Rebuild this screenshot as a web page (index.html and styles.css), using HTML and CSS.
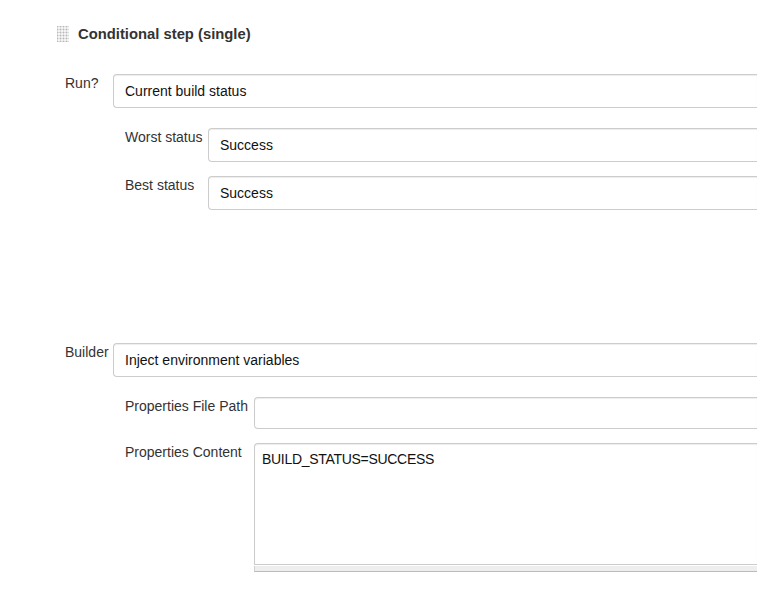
FILE: index.html
```html
<!DOCTYPE html>
<html>
<head>
<meta charset="utf-8">
<link rel="stylesheet" href="styles.css">
</head>
<body>
<div class="page">
  <div class="step">
    <div class="step-header">
      <svg class="handle" width="12" height="16" viewBox="0 0 12 16">
        <defs>
          <pattern id="grid" width="3" height="3" patternUnits="userSpaceOnUse">
            <rect x="0" y="0" width="3" height="3" fill="#f4f4f4"/>
            <rect x="0" y="0" width="1" height="3" fill="#dcdcdc"/>
            <rect x="0" y="0" width="3" height="1" fill="#dcdcdc"/>
            <rect x="0" y="0" width="1" height="1" fill="#b8b8b8"/>
          </pattern>
        </defs>
        <rect x="0" y="0" width="12" height="16" fill="url(#grid)"/>
      </svg>
      <span class="step-title">Conditional step (single)</span>
    </div>

    <div class="row row-main run-row">
      <div class="label main-label">Run?</div>
      <div class="field">Current build status</div>
    </div>

    <div class="nested nested-status">
      <div class="row">
        <div class="label status-label">Worst status</div>
        <div class="field">Success</div>
      </div>
      <div class="row gap-row">
        <div class="label status-label">Best status</div>
        <div class="field">Success</div>
      </div>
    </div>

    <div class="row row-main builder-row">
      <div class="label main-label">Builder</div>
      <div class="field">Inject environment variables</div>
    </div>

    <div class="nested nested-props">
      <div class="row">
        <div class="label props-label">Properties File Path</div>
        <div class="field field-text"></div>
      </div>
      <div class="row gap-row">
        <div class="label props-label">Properties Content</div>
        <div class="area-wrap">
          <div class="textarea">BUILD_STATUS=SUCCESS</div>
          <div class="grippie"></div>
        </div>
      </div>
    </div>
  </div>
</div>
</body>
</html>
```

FILE: styles.css
```css
html, body {
  margin: 0;
  padding: 0;
  background: #ffffff;
  overflow: hidden;
}

.page {
  height: 601px;
  font-family: "Liberation Sans", Arial, sans-serif;
  font-size: 14px;
  color: #333333;
}

.step {
  padding-left: 57px;
  padding-top: 26px;
}

.step-header {
  display: flex;
  align-items: center;
  height: 16px;
}

.handle {
  display: block;
  flex: none;
}

.step-title {
  margin-left: 9px;
  font-weight: bold;
  font-size: 14.8px;
  color: #333333;
  line-height: 16px;
}

.row {
  display: flex;
  align-items: flex-start;
}

.row-main {
  margin-left: 8px;
}

.run-row {
  margin-top: 32px;
}

.builder-row {
  margin-top: 133px;
}

.label {
  flex: none;
  line-height: 16px;
  padding-top: 1px;
  color: #333333;
  white-space: nowrap;
}

.main-label {
  width: 48px;
}

.status-label {
  width: 83px;
}

.props-label {
  width: 129px;
}

.nested {
  margin-left: 68px;
  margin-top: 20px;
}

.gap-row {
  margin-top: 14px;
}

.field {
  flex: 1;
  min-width: 0;
  box-sizing: border-box;
  height: 34px;
  border: 1px solid #cccccc;
  border-right: 0;
  border-radius: 4px 0 0 4px;
  box-shadow: inset 0 1px 1px rgba(0, 0, 0, 0.075);
  padding: 0 11px;
  line-height: 32px;
  color: #111111;
  background: #ffffff;
  white-space: nowrap;
  overflow: hidden;
}

.field-text {
  height: 32px;
  line-height: 30px;
}

.area-wrap {
  flex: 1;
  min-width: 0;
  display: flex;
  flex-direction: column;
}

.textarea {
  box-sizing: border-box;
  height: 122px;
  border: 1px solid #cccccc;
  border-right: 0;
  border-radius: 4px 0 0 0;
  box-shadow: inset 0 1px 1px rgba(0, 0, 0, 0.075);
  padding: 7px 7px;
  line-height: 16px;
  letter-spacing: -0.3px;
  color: #111111;
  background: #ffffff;
}

.grippie {
  height: 5px;
  margin-top: 1px;
  background: #eeeeee;
  border-left: 1px solid #d0d0d0;
  border-bottom: 1px solid #bbbbbb;
}
```
